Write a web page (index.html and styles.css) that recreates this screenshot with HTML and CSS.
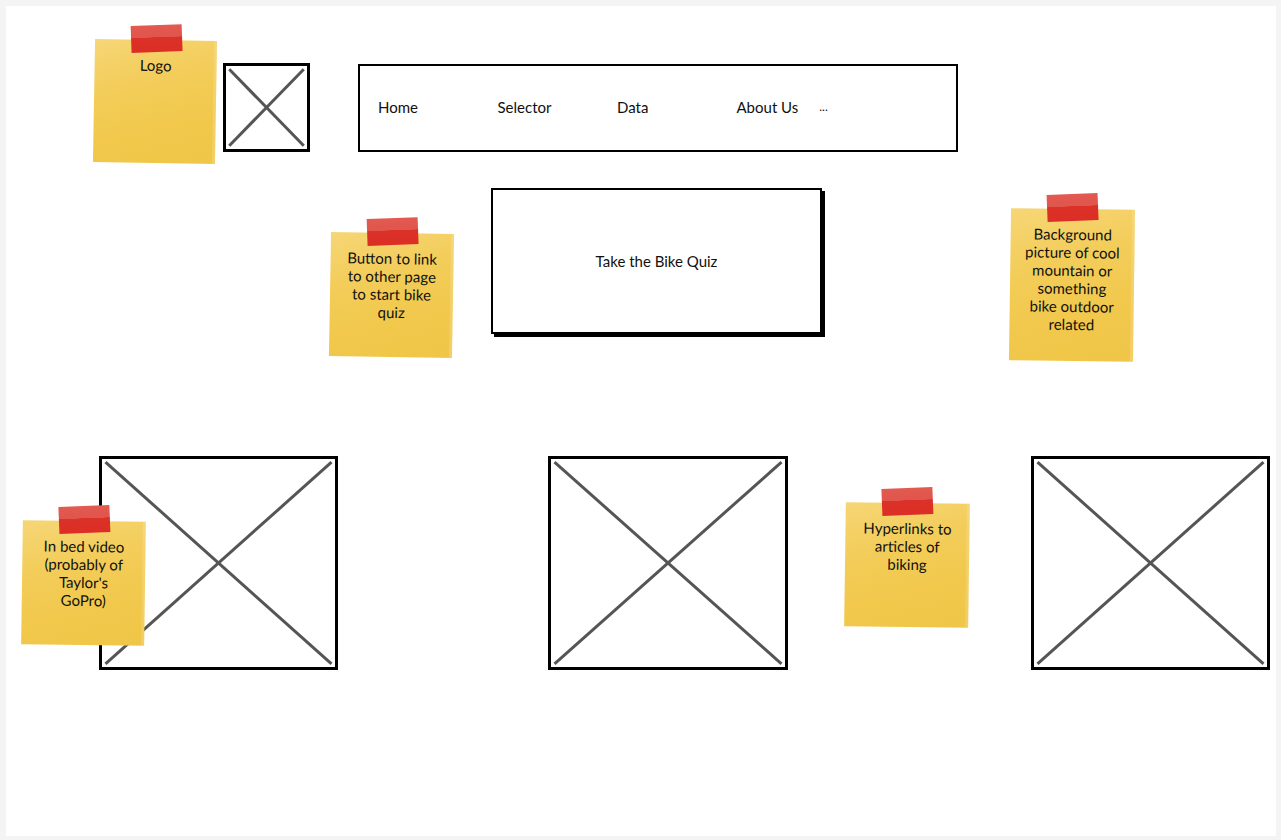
FILE: index.html
```html
<!DOCTYPE html>
<html lang="en">

<head>
    <meta charset="UTF-8">
    <meta name="viewport" content="width=device-width, initial-scale=1.0">
    <title>Bike Site Wireframe</title>
    <link rel="stylesheet" href="styles.css">
</head>

<body>
    <main class="board">

        <!-- header -->
        <div class="note note-logo">
            <span class="tape"></span>
            <p>Logo</p>
        </div>

        <div class="placeholder ph-logo">
            <svg viewBox="0 0 100 100" preserveAspectRatio="none">
                <line x1="4" y1="4" x2="96" y2="96" />
                <line x1="96" y1="4" x2="4" y2="96" />
            </svg>
        </div>

        <nav class="nav">
            <a class="nav-link">Home</a>
            <a class="nav-link">Selector</a>
            <a class="nav-link">Data</a>
            <a class="nav-link nav-about">About Us</a>
            <a class="nav-more">...</a>
        </nav>

        <!-- quiz button -->
        <div class="note note-button">
            <span class="tape"></span>
            <p>Button to link<br>to other page<br>to start bike<br>quiz</p>
        </div>

        <button class="quiz-btn">Take the Bike Quiz</button>

        <div class="note note-bg">
            <span class="tape"></span>
            <p>Background<br>picture of cool<br>mountain or<br>something<br>bike outdoor<br>related</p>
        </div>

        <!-- bottom row -->
        <div class="placeholder ph-big ph-one">
            <svg viewBox="0 0 100 100" preserveAspectRatio="none">
                <line x1="1.5" y1="1.5" x2="98.5" y2="98.5" />
                <line x1="98.5" y1="1.5" x2="1.5" y2="98.5" />
            </svg>
        </div>

        <div class="placeholder ph-big ph-two">
            <svg viewBox="0 0 100 100" preserveAspectRatio="none">
                <line x1="1.5" y1="1.5" x2="98.5" y2="98.5" />
                <line x1="98.5" y1="1.5" x2="1.5" y2="98.5" />
            </svg>
        </div>

        <div class="placeholder ph-big ph-three">
            <svg viewBox="0 0 100 100" preserveAspectRatio="none">
                <line x1="1.5" y1="1.5" x2="98.5" y2="98.5" />
                <line x1="98.5" y1="1.5" x2="1.5" y2="98.5" />
            </svg>
        </div>

        <div class="note note-video">
            <span class="tape"></span>
            <p>In bed video<br>(probably of<br>Taylor's<br>GoPro)</p>
        </div>

        <div class="note note-links">
            <span class="tape"></span>
            <p>Hyperlinks to<br>articles of<br>biking</p>
        </div>

    </main>
</body>

</html>
```

FILE: styles.css
```css
* {
    padding: 0;
    margin: 0;
    box-sizing: border-box;
}

body {
    background: #f4f4f4;
    font-family: Lato, "Open Sans", sans-serif;
    font-size: 15px;
    color: #111;
}

.board {
    position: relative;
    width: 1270px;
    height: 830px;
    margin: 6px;
    background: #fff;
}

/* sticky notes */
.note {
    position: absolute;
    width: 123px;
    height: 124px;
    padding-top: 16px;
    text-align: center;
    line-height: 18px;
    background: linear-gradient(165deg, #f6d676 0%, #f3cd5a 35%, #f1c84b 70%, #f0c648 100%);
    box-shadow: inset -3px 0 0 rgba(255, 255, 255, 0.15);
}

.note p {
    position: relative;
}

.tape {
    position: absolute;
    left: 36px;
    top: -15px;
    width: 51px;
    height: 27px;
    background: linear-gradient(#e25a51 0%, #e0554c 45%, #dc3128 46%, #db2f26 100%);
    transform: rotate(-3deg);
}

.note-logo {
    left: 88px;
    top: 34px;
    width: 122px;
    height: 123px;
    transform: rotate(1deg);
}

.note-button {
    left: 324px;
    top: 227px;
    transform: rotate(1deg);
}

.note-bg {
    left: 1004px;
    top: 203px;
    width: 124px;
    height: 152px;
    transform: rotate(0.8deg);
}

.note-video {
    left: 16px;
    top: 515px;
    transform: rotate(0.8deg);
}

.note-links {
    left: 839px;
    top: 497px;
    width: 124px;
    transform: rotate(0.8deg);
}

/* image placeholders */
.placeholder {
    position: absolute;
    border: 3px solid #000;
    background: #fff;
}

.placeholder svg {
    display: block;
    width: 100%;
    height: 100%;
}

.placeholder line {
    stroke: #555;
    stroke-width: 3;
    vector-effect: non-scaling-stroke;
}

.ph-logo {
    left: 217px;
    top: 57px;
    width: 87px;
    height: 89px;
}

.ph-big {
    top: 450px;
    width: 239px;
    height: 214px;
}

.ph-one {
    left: 93px;
}

.ph-two {
    left: 542px;
    width: 240px;
}

.ph-three {
    left: 1025px;
}

/* navigation */
.nav {
    position: absolute;
    left: 352px;
    top: 58px;
    width: 600px;
    height: 88px;
    border: 2px solid #000;
    display: flex;
    align-items: center;
    padding-left: 18px;
    padding-bottom: 3px;
}

.nav-link {
    width: 119.5px;
}

.nav-about {
    width: auto;
    margin-right: 21px;
}

.nav-more {
    font-size: 12px;
}

/* quiz button */
.quiz-btn {
    position: absolute;
    left: 485px;
    top: 182px;
    width: 331px;
    height: 146px;
    border: 2px solid #000;
    box-shadow: 3px 3px 0 #000;
    background: #fff;
    font-family: inherit;
    font-size: 15px;
    color: #111;
}
```
